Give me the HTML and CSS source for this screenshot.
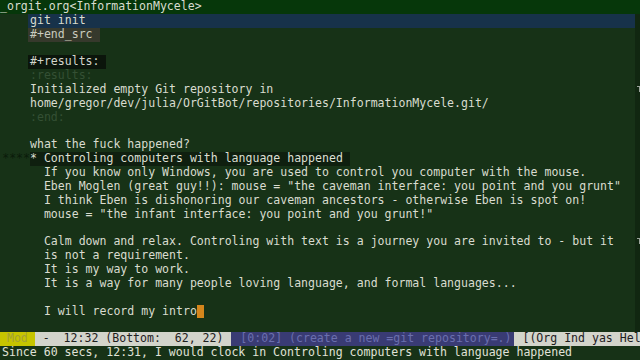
FILE: index.html
```html
<!DOCTYPE html>
<html>
<head>
<meta charset="utf-8">
<link rel="stylesheet" href="styles.css">
</head>
<body>
<div class="frame">
  <div class="title">_orgit.org&lt;InformationMycele&gt;</div>
  <div class="window">
    <div class="line"><div class="txt"><span class="pre">    </span><span class="hl">git init</span></div><div class="fringe"></div></div>
    <div class="line"><div class="txt"><span class="pre">    </span><span class="endsrc">#+end_src </span></div><div class="fringe"></div></div>
    <div class="line"><div class="txt"> </div><div class="fringe"></div></div>
    <div class="line"><div class="txt"><span class="pre">    </span><span class="results">#+results: </span></div><div class="fringe"></div></div>
    <div class="line"><div class="txt"><span class="pre">    </span><span class="dim">:results:</span></div><div class="fringe"></div></div>
    <div class="line"><div class="txt">    Initialized empty Git repository in</div><div class="fringe"><span class="wrap"></span></div></div>
    <div class="line"><div class="txt">    home/gregor/dev/julia/OrGitBot/repositories/InformationMycele.git/</div><div class="fringe"></div></div>
    <div class="line"><div class="txt"><span class="pre">    </span><span class="dim">:end:</span></div><div class="fringe"></div></div>
    <div class="line"><div class="txt"> </div><div class="fringe"></div></div>
    <div class="line"><div class="txt">    what the fuck happened?</div><div class="fringe"></div></div>
    <div class="line"><div class="txt"><span class="stars">****</span><span class="heading">* Controling computers with language happened </span></div><div class="fringe"></div></div>
    <div class="line"><div class="txt">      If you know only Windows, you are used to control you computer with the mouse.</div><div class="fringe"></div></div>
    <div class="line"><div class="txt">      Eben Moglen (great guy!!): mouse = "the caveman interface: you point and you grunt"</div><div class="fringe"></div></div>
    <div class="line"><div class="txt">      I think Eben is dishonoring our caveman ancestors - otherwise Eben is spot on!</div><div class="fringe"></div></div>
    <div class="line"><div class="txt">      mouse = "the infant interface: you point and you grunt!"</div><div class="fringe"></div></div>
    <div class="line"><div class="txt"> </div><div class="fringe"></div></div>
    <div class="line"><div class="txt">      Calm down and relax. Controling with text is a journey you are invited to - but it</div><div class="fringe"><span class="wrap"></span></div></div>
    <div class="line"><div class="txt">      is not a requirement.</div><div class="fringe"></div></div>
    <div class="line"><div class="txt">      It is my way to work.</div><div class="fringe"></div></div>
    <div class="line"><div class="txt">      It is a way for many people loving language, and formal languages...</div><div class="fringe"></div></div>
    <div class="line"><div class="txt"> </div><div class="fringe"></div></div>
    <div class="line"><div class="txt">      I will record my intro<span class="cursor"> </span></div><div class="fringe"></div></div>
    <div class="line"><div class="txt"> </div><div class="fringe"></div></div>
  </div>
  <div class="modeline">
    <span class="seg mod"> Mod </span><span class="seg pos"> -  12:32 (Bottom:  62, 22) </span><span class="seg clock"> [0:02] (create a new =git repository=.)</span><span class="seg modes"> [(Org Ind yas Helm</span>
  </div>
  <div class="echo">Since 60 secs, 12:31, I would clock in Controling computers with language happened</div>
</div>
</body>
</html>
```

FILE: styles.css
```css
html, body {
  margin: 0;
  padding: 0;
  width: 640px;
  height: 360px;
  overflow: hidden;
  background: #173217;
}

.frame {
  width: 640px;
  height: 360px;
  display: flex;
  flex-direction: column;
  font-family: "DejaVu Sans Mono", monospace;
  font-size: 11.55px;
  line-height: 13.846px;
  color: #d9dccf;
  white-space: pre;
}

.title {
  height: 13.846px;
  background: #06370a;
  color: #d8dccf;
  padding-left: 0;
  overflow: hidden;
}

.window {
  display: flex;
  flex-direction: column;
  background: #173217;
}

.line {
  display: flex;
  height: 13.846px;
}

.txt {
  flex: 1;
  display: flex;
  padding-left: 2.2px;
  overflow: hidden;
}

.fringe {
  width: 5px;
  background: #112711;
  position: relative;
}

.wrap {
  position: absolute;
  left: 2px;
  top: 3px;
  width: 2px;
  height: 5px;
  border-top: 1px solid #9aa39a;
  border-right: 1px solid #9aa39a;
}

.pre {
  display: inline-block;
}

.hl {
  flex: 1;
  background: #17324a;
  margin-left: -2px;
  padding-left: 2px;
}

.endsrc {
  background: #36392c;
  color: #c9cbbf;
  margin-left: -2px;
  padding-left: 2px;
}

.results {
  background: #0b150b;
  color: #d4d6cc;
  margin-left: -2px;
  padding-left: 2px;
}

.dim {
  color: #345034;
}

.stars {
  color: #0a1b0a;
}

.heading {
  background: #0f1f0f;
  color: #dcdfd2;
}

.cursor {
  background: #d4861c;
}

.modeline {
  height: 13.846px;
  display: flex;
  background: #d3d4cb;
  overflow: hidden;
}

.seg {
  display: block;
}

.mod {
  background: #c6c400;
  color: #a3a234;
}

.pos {
  background: #d3d4cb;
  color: #1e201e;
  padding-left: 1px;
  padding-right: 1px;
}

.clock {
  background: #393b74;
  color: #6b6fae;
  padding-left: 2px;
  padding-right: 2px;
}

.modes {
  flex: 1;
  background: #d3d4cb;
  color: #1e201e;
  padding-left: 2px;
}

.echo {
  height: 13.846px;
  padding-left: 2px;
  background: #173217;
  color: #e0e2d8;
}
```
